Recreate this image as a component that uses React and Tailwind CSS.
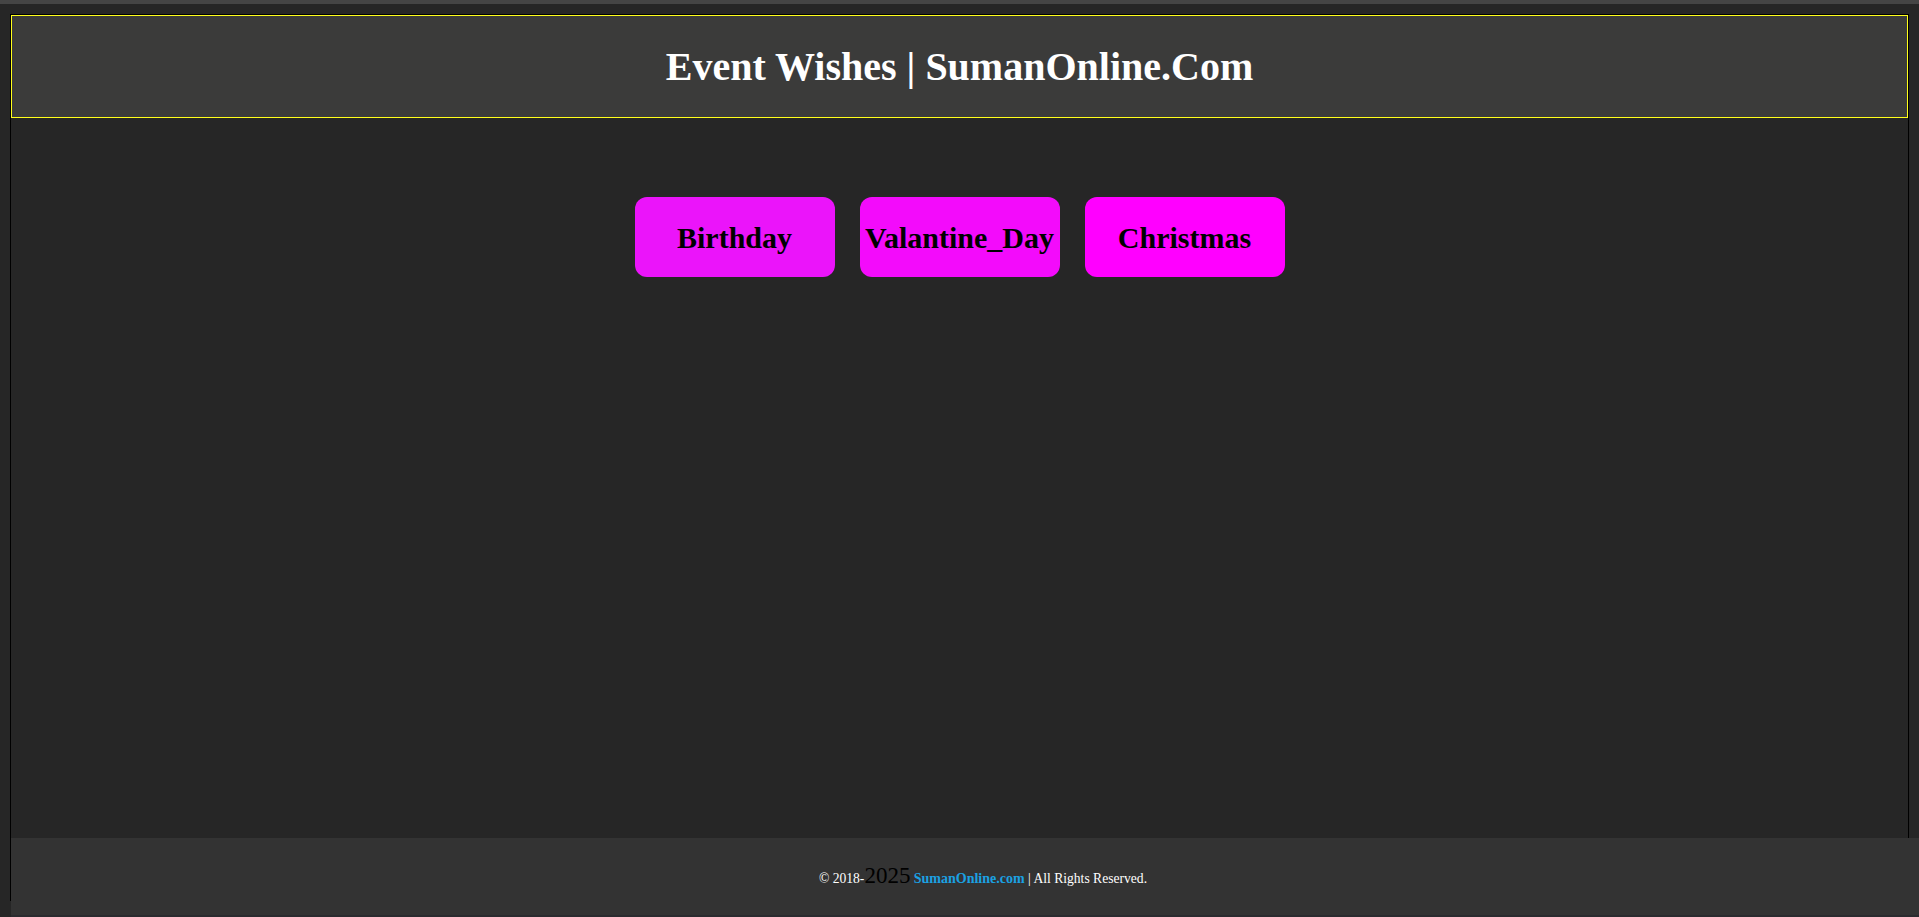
import React from 'react';

const events = [
  { name: 'Birthday', color: 'bg-[#eb14fa]' },
  { name: 'Valantine_Day', color: 'bg-[#f30bfb]' },
  { name: 'Christmas', color: 'bg-[#ff00ff]' },
];

export default function App() {
  return (
    <div className="min-h-screen bg-[#262626] font-['Liberation_Serif',serif] overflow-hidden">
      <div className="h-[4px] bg-[#454545]" />

      <div className="mx-[10px] mt-[10px] h-[887px] border border-black">
        <header className="h-[103px] border border-[#ffff1a] bg-[#3b3b3a] flex items-center justify-center">
          <h1 className="text-[40px] font-bold text-white leading-none">Event Wishes | SumanOnline.Com</h1>
        </header>

        <div className="mt-[79px] flex justify-center gap-[25px]">
          {events.map(ev => (
            <button
              key={ev.name}
              className={"w-[200px] h-[80px] rounded-xl flex items-center justify-center text-[30px] font-bold text-black " + ev.color}
            >
              {ev.name}
            </button>
          ))}
        </div>
      </div>

      <footer className="fixed bottom-0 left-[11px] right-0 h-[79px] bg-[#333333] border-b-2 border-[#2b2b2f] flex items-center justify-center pl-[36px]">
        <p className="text-[13.6px] text-white">
          © 2018-<span className="text-[23px] text-black">2025</span>{' '}
          <a href="#" className="font-bold text-[#1ba1e2] text-[14px]">SumanOnline.com</a> | All Rights Reserved.
        </p>
      </footer>
    </div>
  );
}
